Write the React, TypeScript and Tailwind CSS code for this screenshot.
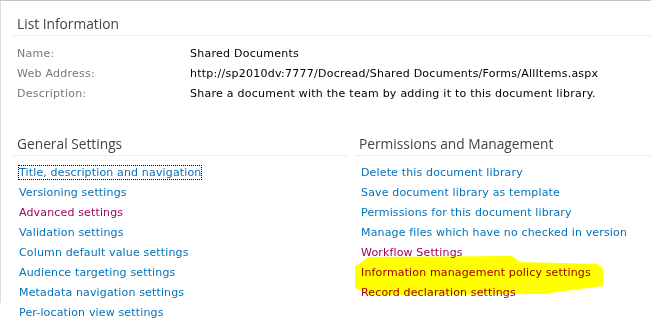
const body = { fontFamily: '"DejaVu Sans", Verdana, sans-serif' };
const head = { fontFamily: '"Open Sans", "Noto Sans", sans-serif' };

type Link = { label: string; visited?: boolean; focused?: boolean };

const general: Link[] = [
  { label: "Title, description and navigation", focused: true },
  { label: "Versioning settings" },
  { label: "Advanced settings", visited: true },
  { label: "Validation settings" },
  { label: "Column default value settings" },
  { label: "Audience targeting settings" },
  { label: "Metadata navigation settings" },
  { label: "Per-location view settings" },
];

const permissions: Link[] = [
  { label: "Delete this document library" },
  { label: "Save document library as template" },
  { label: "Permissions for this document library" },
  { label: "Manage files which have no checked in version" },
  { label: "Workflow Settings", visited: true },
  { label: "Information management policy settings", visited: true },
  { label: "Record declaration settings", visited: true },
];

function SectionHeader({ title }: { title: string }) {
  return (
    <div className="border-b border-[#ededed] pl-1 h-[26px] flex items-end pb-[2px]">
      <span style={head} className="text-[13.75px] leading-[18px] text-[#444]">
        {title}
      </span>
    </div>
  );
}

function LinkList({ links }: { links: Link[] }) {
  return (
    <ul className="mt-[4px] pl-[6px]">
      {links.map((l) => (
        <li key={l.label} className="h-[20px] leading-[20px]">
          <a
            href="#"
            style={body}
            className={`text-[11px] tracking-[0.15px] ${l.visited ? "text-[#a1005c]" : "text-[#0072bc]"} ${
              l.focused ? "outline-1 outline-dotted outline-black" : ""
            }`}
          >
            {l.label}
          </a>
        </li>
      ))}
    </ul>
  );
}

export default function App() {
  return (
    <div className="relative w-[651px] h-[335px] bg-white overflow-hidden border-t border-[#c4c4c4]">
      <div className="h-[302px] border-l border-[#dcdcdc] pl-[12px]">
        <div className="pt-[9px]">
          <SectionHeader title="List Information" />
          <table style={body} className="mt-[8px] ml-[4px] text-[11px] tracking-[0.25px]">
            <tbody>
              <tr className="h-[20px]">
                <td className="w-[173px] text-[#777]">Name:</td>
                <td className="text-black">Shared Documents</td>
              </tr>
              <tr className="h-[20px]">
                <td className="text-[#777]">Web Address:</td>
                <td className="text-black">http://sp2010dv:7777/Docread/Shared Documents/Forms/AllItems.aspx</td>
              </tr>
              <tr className="h-[20px]">
                <td className="text-[#777]">Description:</td>
                <td className="text-black">Share a document with the team by adding it to this document library.</td>
              </tr>
            </tbody>
          </table>
        </div>
        <div className="mt-[26px] flex gap-[8px]">
          <div className="w-[334px]">
            <SectionHeader title="General Settings" />
            <LinkList links={general} />
          </div>
          <div className="flex-1">
            <SectionHeader title="Permissions and Management" />
            <LinkList links={permissions} />
          </div>
        </div>
      </div>
      <svg
        className="absolute left-0 top-0 pointer-events-none mix-blend-multiply"
        width="651"
        height="335"
      >
        <path
          d="M368 256 L512 255 L520 261 L598 263 L603 268 L603 285 L543 293 L370 294 L355 287 L355 265 L362 261 Z"
          fill="#ffff00"
        />
      </svg>
    </div>
  );
}
